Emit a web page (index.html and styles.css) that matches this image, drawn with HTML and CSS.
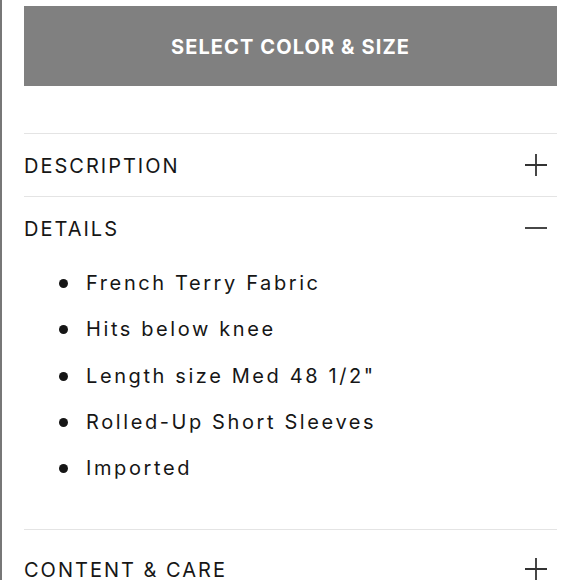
FILE: index.html
```html
<!DOCTYPE html>
<html lang="en">
<head>
<meta charset="utf-8">
<title>Product details</title>
<link rel="stylesheet" href="styles.css">
</head>
<body>
<div class="page">
  <button class="select-btn" type="button">SELECT COLOR &amp; SIZE</button>
  <section class="accordion">
    <div class="acc-item">
      <div class="acc-head">
        <span class="acc-title">DESCRIPTION</span>
        <svg class="acc-icon" viewBox="0 0 22 22" width="22" height="22"><path d="M11 0V22M0 11H22"/></svg>
      </div>
    </div>
    <div class="acc-item">
      <div class="acc-head">
        <span class="acc-title">DETAILS</span>
        <svg class="acc-icon" viewBox="0 0 22 22" width="22" height="22"><path d="M0 11H22"/></svg>
      </div>
      <ul class="details">
        <li>French Terry Fabric</li>
        <li>Hits below knee</li>
        <li>Length size Med 48 1/2"</li>
        <li>Rolled-Up Short Sleeves</li>
        <li>Imported</li>
      </ul>
    </div>
    <div class="acc-item">
      <div class="acc-head acc-head-last">
        <span class="acc-title">CONTENT &amp; CARE</span>
        <svg class="acc-icon" viewBox="0 0 22 22" width="22" height="22"><path d="M11 0V22M0 11H22"/></svg>
      </div>
    </div>
  </section>
</div>
</body>
</html>
```

FILE: styles.css
```css
html, body {
  margin: 0;
  padding: 0;
  background: #fff;
}

body {
  font-family: Inter, "Open Sans", "Liberation Sans", sans-serif;
  color: #1c1c1c;
  overflow: hidden;
}

.page {
  border-left: 2px solid #777;
  min-height: 100vh;
  box-sizing: border-box;
  padding: 6px 23px 0 22px;
}

.select-btn {
  display: block;
  width: 100%;
  height: 80px;
  margin: 0 0 47px;
  border: 0;
  background: #808080;
  color: #fff;
  font-family: Inter, "Open Sans", "Liberation Sans", sans-serif;
  font-weight: 700;
  font-size: 20px;
  letter-spacing: 1.1px;
  padding: 2px 0 0;
}

.accordion {
  border-top: 1px solid #e4e4e4;
}

.acc-item {
  border-bottom: 1px solid #e4e4e4;
}

.acc-item:last-child {
  border-bottom: 0;
}

.acc-head {
  height: 62px;
  display: flex;
  align-items: center;
  justify-content: space-between;
}

.acc-head-last {
  padding-top: 8px;
}

.acc-title {
  font-size: 20px;
  font-weight: 400;
  letter-spacing: 2px;
  color: #161616;
  padding-top: 1px;
}

.acc-icon {
  margin-right: 10px;
  flex: none;
}

.acc-icon path {
  stroke: #333;
  stroke-width: 1.8;
  fill: none;
}

.details {
  list-style: none;
  margin: 0;
  padding: 1px 0 38px 35px;
}

.details li {
  position: relative;
  line-height: 46.3px;
  font-size: 20px;
  letter-spacing: 2.6px;
  padding-left: 27px;
  color: #161616;
}

.details li::before {
  content: "";
  position: absolute;
  left: 0;
  top: 50%;
  width: 9px;
  height: 9px;
  margin-top: -4px;
  border-radius: 50%;
  background: #161616;
}
```
